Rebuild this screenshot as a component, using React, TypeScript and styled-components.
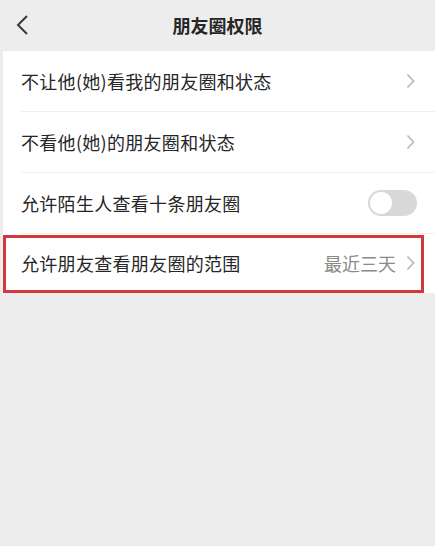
import React from 'react'
import styled, { createGlobalStyle } from 'styled-components'

const Global = createGlobalStyle`
  html, body {
    margin: 0;
    padding: 0;
    background: #ededed;
    font-family: "Noto Sans CJK SC", "Noto Sans", sans-serif;
  }
`

const Page = styled.div`
  width: 435px;
  height: 546px;
  background: #ededed;
  overflow: hidden;
`

const Header = styled.header`
  height: 51px;
  display: flex;
  align-items: center;
  justify-content: center;
  position: relative;
`

const Back = styled.div`
  position: absolute;
  left: 15px;
  top: 13px;
  width: 16px;
  height: 24px;
  display: flex;
`

const Title = styled.h1`
  margin: 0 0 2px 0;
  font-size: 18px;
  font-weight: 600;
  color: #262626;
`

const List = styled.div`
  margin-left: 3px;
  background: #fff;
`

const Row = styled.div<{ $last?: boolean; $marked?: boolean }>`
  height: ${p => (p.$marked ? 59 : 61)}px;
  display: flex;
  align-items: center;
  padding: 0 20px 2px 18px;
  box-sizing: border-box;
  position: relative;

  &::before {
    content: '';
    display: ${p => (p.$last ? 'none' : 'block')};
    position: absolute;
    left: 18px;
    right: 0;
    bottom: 0;
    height: 1px;
    background: #efefef;
  }

  ${p =>
    p.$marked &&
    `
    &::after {
      content: '';
      position: absolute;
      left: 0;
      right: 11px;
      top: 1px;
      bottom: 0;
      border: 3px solid #d2393c;
    }
  `}
`

const Label = styled.span`
  flex: 1;
  font-size: 18px;
  letter-spacing: 0.3px;
  color: #262626;
  white-space: nowrap;
`

const Value = styled.span`
  font-size: 18px;
  color: #8a8a8a;
  margin-right: 10px;
`

const Toggle = styled.div`
  width: 49px;
  height: 26px;
  border-radius: 13px;
  background: #d8d8d8;
  margin-right: -2px;
  display: flex;
  align-items: center;
  padding-left: 2px;
  box-sizing: border-box;
`

const Knob = styled.div`
  width: 22px;
  height: 22px;
  border-radius: 50%;
  background: #fff;
`

const Chevron = () => (
  <svg width="9" height="16" viewBox="0 0 9 16">
    <path d="M1.5 1.5 L7.5 8 L1.5 14.5" fill="none" stroke="#b5b5b5" strokeWidth="1.5" />
  </svg>
)

export default function App() {
  return (
    <Page>
      <Global />
      <Header>
        <Back>
          <svg width="16" height="24" viewBox="0 0 16 24">
            <path d="M12 3 L3 12 L12 21" fill="none" stroke="#3a3a3a" strokeWidth="2" />
          </svg>
        </Back>
        <Title>朋友圈权限</Title>
      </Header>
      <List>
        <Row>
          <Label>不让他(她)看我的朋友圈和状态</Label>
          <Chevron />
        </Row>
        <Row>
          <Label>不看他(她)的朋友圈和状态</Label>
          <Chevron />
        </Row>
        <Row>
          <Label>允许陌生人查看十条朋友圈</Label>
          <Toggle>
            <Knob />
          </Toggle>
        </Row>
        <Row $last $marked>
          <Label>允许朋友查看朋友圈的范围</Label>
          <Value>最近三天</Value>
          <Chevron />
        </Row>
      </List>
    </Page>
  )
}
